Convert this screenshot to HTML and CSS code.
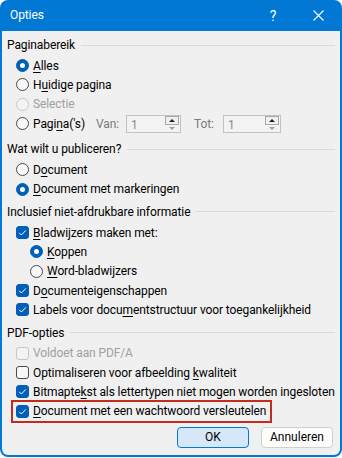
FILE: index.html
```html
<!DOCTYPE html>
<html lang="nl">
<head>
    <meta charset="UTF-8">
    <title>Opties</title>
    <link rel="stylesheet" href="styles.css">
</head>
<body>
    <div class="window">
        <div class="titlebar">
            <span class="title">Opties</span>
            <span class="help">?</span>
            <span class="close">
                <svg width="11" height="11" viewBox="0 0 11 11"><path d="M0.5 0.5 L10.5 10.5 M10.5 0.5 L0.5 10.5" stroke="#fff" stroke-width="1.1" fill="none"/></svg>
            </span>
        </div>
        <div class="content">
            <div class="group">
                <div class="group-title"><span>Paginabereik</span></div>
                <div class="rows">
                    <div class="row"><span class="radio checked"></span><span><u>A</u>lles</span></div>
                    <div class="row"><span class="radio"></span><span>H<u>u</u>idige pagina</span></div>
                    <div class="row disabled"><span class="radio"></span><span>Selectie</span></div>
                    <div class="row pages">
                        <span class="radio"></span>
                        <span class="pages-label">Pagi<u>n</u>a('s)</span>
                        <span class="field-label">Van:</span>
                        <span class="spin-field van">
                            <span class="spin-value">1</span>
                            <span class="spin-buttons"><span class="spin-up"></span><span class="spin-down"></span></span>
                        </span>
                        <span class="field-label tot">Tot:</span>
                        <span class="spin-field">
                            <span class="spin-value">1</span>
                            <span class="spin-buttons"><span class="spin-up"></span><span class="spin-down"></span></span>
                        </span>
                    </div>
                </div>
            </div>

            <div class="group">
                <div class="group-title"><span>Wat wilt u publiceren?</span></div>
                <div class="rows">
                    <div class="row"><span class="radio"></span><span>D<u>o</u>cument</span></div>
                    <div class="row"><span class="radio checked"></span><span><u>D</u>ocument met markeringen</span></div>
                </div>
            </div>

            <div class="group">
                <div class="group-title"><span>Inclusief niet-afdrukbare informatie</span></div>
                <div class="rows">
                    <div class="row"><span class="check checked"><svg width="13" height="13" viewBox="0 0 13 13"><path d="M3.2 6.8 L5.4 9 L9.8 4.4" stroke="#fff" stroke-width="1" fill="none"/></svg></span><span><u>B</u>ladwijzers maken met:</span></div>
                    <div class="row sub"><span class="radio checked"></span><span><u>K</u>oppen</span></div>
                    <div class="row sub"><span class="radio"></span><span><u>W</u>ord-bladwijzers</span></div>
                    <div class="row"><span class="check checked"><svg width="13" height="13" viewBox="0 0 13 13"><path d="M3.2 6.8 L5.4 9 L9.8 4.4" stroke="#fff" stroke-width="1" fill="none"/></svg></span><span>D<u>o</u>cumenteigenschappen</span></div>
                    <div class="row"><span class="check checked"><svg width="13" height="13" viewBox="0 0 13 13"><path d="M3.2 6.8 L5.4 9 L9.8 4.4" stroke="#fff" stroke-width="1" fill="none"/></svg></span><span>Labels voor docu<u>m</u>entstructuur voor toegankelijkheid</span></div>
                </div>
            </div>

            <div class="group">
                <div class="group-title"><span>PDF-opties</span></div>
                <div class="rows">
                    <div class="row disabled"><span class="check"></span><span>Voldoet aan PDF/A</span></div>
                    <div class="row"><span class="check"></span><span>Optimaliseren voor afbeelding <u>k</u>waliteit</span></div>
                    <div class="row"><span class="check checked"><svg width="13" height="13" viewBox="0 0 13 13"><path d="M3.2 6.8 L5.4 9 L9.8 4.4" stroke="#fff" stroke-width="1" fill="none"/></svg></span><span>Bitmapte<u>k</u>st als lettertypen niet mogen worden ingesloten</span></div>
                    <div class="row marked"><span class="check checked"><svg width="13" height="13" viewBox="0 0 13 13"><path d="M3.2 6.8 L5.4 9 L9.8 4.4" stroke="#fff" stroke-width="1" fill="none"/></svg></span><span><u>D</u>ocument met een wachtwoord versleutelen</span></div>
                </div>
            </div>

            <div class="buttons">
                <button class="btn primary">OK</button>
                <button class="btn">Annuleren</button>
            </div>
        </div>
    </div>
</body>
</html>
```

FILE: styles.css
```css
body {
    margin: 0;
    background: #ffffff;
    font-family: Roboto, 'Noto Sans', sans-serif;
    font-size: 12px;
    letter-spacing: -0.1px;
    color: #000;
}
.window {
    width: 342px;
    height: 457px;
    box-sizing: border-box;
    background: #0078d4;
    border-radius: 8px;
    padding: 0 2px 2px;
    display: flex;
    flex-direction: column;
    overflow: hidden;
}
.titlebar {
    height: 31px;
    flex: none;
    display: flex;
    align-items: center;
    color: #fff;
    padding: 0 7px 0 8px;
}
.title {
    flex: 1;
    padding-bottom: 1px;
}
.help {
    width: 30px;
    text-align: center;
    font-size: 14px;
    margin-right: 15px;
}
.close {
    width: 30px;
    height: 11px;
    display: flex;
    justify-content: center;
}
.content {
    flex: 1;
    background: #f0f0f0;
    border-radius: 0 0 6px 6px;
    padding: 6px 5px 0 5px;
}
.group + .group {
    margin-top: 5px;
}
.group-title {
    display: flex;
    align-items: center;
    height: 16px;
    gap: 6px;
    white-space: nowrap;
}
.group-title::after {
    content: '';
    flex: 1;
    height: 1px;
    background: #dadada;
}
.rows {
    padding: 3px 0 0 9px;
    display: flex;
    flex-direction: column;
}
.row {
    height: 19.33px;
    display: flex;
    align-items: center;
    gap: 4px;
    white-space: nowrap;
}
.row.sub {
    padding-left: 14px;
}
.row.disabled {
    color: #a0a0a0;
}
u {
    text-decoration-thickness: 1px;
    text-underline-offset: 2px;
}
.radio {
    width: 11px;
    height: 11px;
    border: 1px solid #4a4a4a;
    border-radius: 50%;
    background: #f8f8f8;
    flex: none;
    position: relative;
}
.radio.checked {
    background: #005fb8;
    border-color: #005fb8;
}
.radio.checked::after {
    content: '';
    position: absolute;
    left: 3px;
    top: 3px;
    width: 5px;
    height: 5px;
    border-radius: 50%;
    background: #fff;
}
.disabled .radio,
.disabled .check {
    border-color: #c6c6c6;
    background: #f3f3f3;
}
.check {
    width: 11px;
    height: 11px;
    border: 1px solid #4a4a4a;
    border-radius: 3px;
    background: #f8f8f8;
    flex: none;
    position: relative;
}
.check svg {
    position: absolute;
    left: -1px;
    top: -1px;
}
.check.checked {
    background: #005fb8;
    border-color: #005fb8;
}
.pages {
    margin-bottom: 3px;
}
.pages-label {
    width: 59px;
}
.field-label {
    color: #7a7a7a;
    width: 26px;
}
.field-label.tot {
    width: 25px;
    margin-left: 9px;
}
.spin-field {
    width: 58px;
    height: 18px;
    box-sizing: border-box;
    border: 1px solid #c2c2c2;
    background: #f3f3f3;
    display: flex;
    align-items: center;
    color: #8a8a8a;
}
.spin-field.van {
    width: 55px;
}
.spin-value {
    flex: 1;
    padding-left: 4px;
    padding-top: 2px;
}
.spin-buttons {
    width: 14px;
    height: 16px;
    display: flex;
    flex-direction: column;
    margin-right: 1px;
}
.spin-up,
.spin-down {
    flex: 1;
    display: flex;
    justify-content: center;
    align-items: center;
}
.spin-up {
    border: 1px solid #a8a8a8;
    background: #f0f0f0;
}
.spin-up::after {
    content: '';
    border-left: 3px solid transparent;
    border-right: 3px solid transparent;
    border-bottom: 3px solid #222;
}
.spin-down::after {
    content: '';
    border-left: 3px solid transparent;
    border-right: 3px solid transparent;
    border-top: 3px solid #a0a0a0;
}
.row.marked {
    align-self: flex-start;
    border: 2px solid #c42b1c;
    margin: -2px 0 -2px -5px;
    padding: 0 4px 0 3px;
}
.buttons {
    display: flex;
    justify-content: flex-end;
    gap: 12px;
    margin-top: 5.7px;
    padding-right: 2px;
}
.btn {
    width: 72px;
    height: 21px;
    font-family: inherit;
    font-size: 12px;
    color: #000;
    background: #fdfdfd;
    border: 1px solid #d0d0d0;
    border-radius: 4px;
    padding: 0;
}
.btn.primary {
    background: #d6e8f8;
    border-color: #0078d4;
}
```
